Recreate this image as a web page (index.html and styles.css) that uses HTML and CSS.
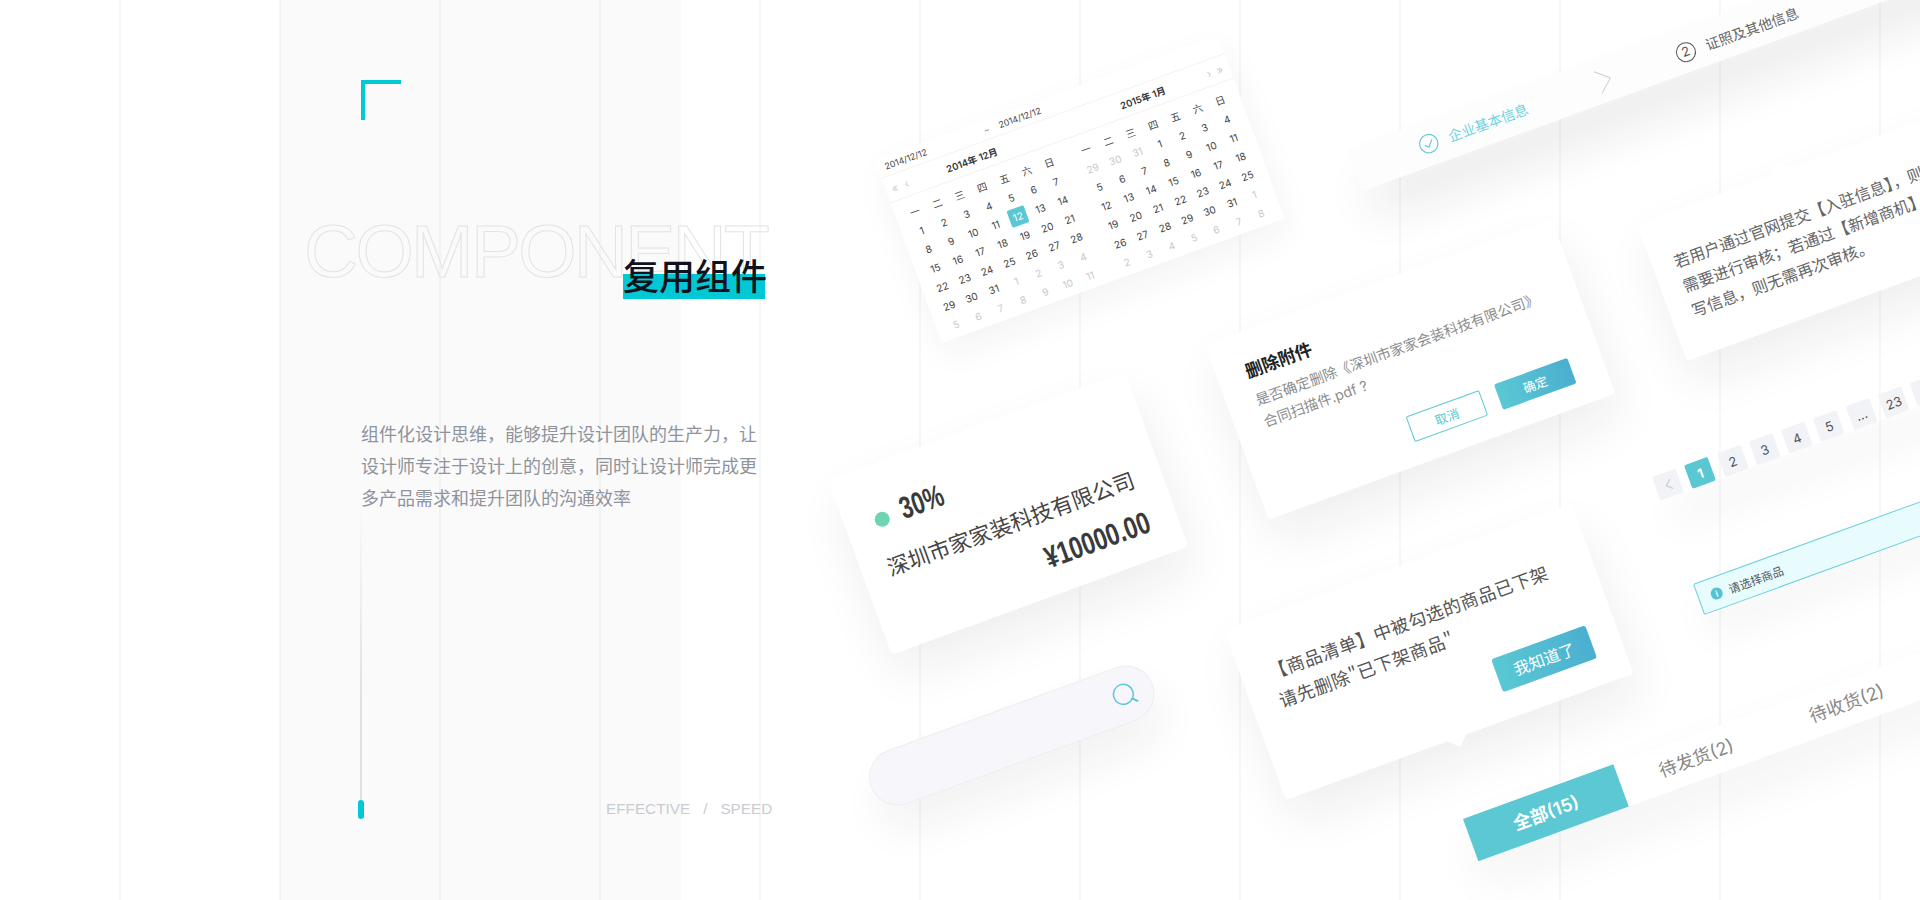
FILE: index.html
```html
<!DOCTYPE html>
<html lang="zh-CN">
<head>
<meta charset="utf-8">
<title>复用组件</title>
<link rel="stylesheet" href="styles.css">
</head>
<body>
<main class="page">
  <div class="gridlines"></div>
  <section class="panel">
    <div class="corner"></div>
    <div class="heading">
      <div class="ghost">COMPONENT</div>
      <h1 class="title">复用组件</h1>
    </div>
    <p class="intro">组件化设计思维，能够提升设计团队的生产力，让<br>设计师专注于设计上的创意，同时让设计师完成更<br>多产品需求和提升团队的沟通效率</p>
    <div class="foot">
      <div class="track"><i class="knob"></i></div>
      <div class="tags"><span>EFFECTIVE</span><span>/</span><span>SPEED</span></div>
    </div>
  </section>

  <div class="tilt steps">
    <span class="step-icon"><svg width="20" height="20" viewBox="0 0 20 20" fill="none" stroke="#5ac8d6" stroke-width="1.1"><circle cx="10" cy="10" r="9.2"/><path d="M6 10.4l3 3 5-6" stroke-linecap="round" stroke-linejoin="round"/></svg></span>
    <span class="step-text on">企业基本信息</span>
    <svg class="chev" width="15" height="25" viewBox="0 0 15 25" fill="none" stroke="#c8ccd6" stroke-width="1"><path d="M1 1l13 11.500L1 24"/></svg>
    <span class="step-num">2</span>
    <span class="step-text">证照及其他信息</span>
    <svg class="chev" width="15" height="25" viewBox="0 0 15 25" fill="none" stroke="#c8ccd6" stroke-width="1"><path d="M1 1l13 11.500L1 24"/></svg>
  </div>

  <div class="tilt cal">
    <div class="cal-inputs"><span>2014/12/12</span><span class="tilde">~</span><span>2014/12/12</span></div>
    <div class="cal-head">
      <span class="nav">« ‹</span><b class="m1">2014年 12月</b><b class="m2">2015年 1月</b><span class="nav nav-r">› »</span>
    </div>
    <div class="cal-body">
      <div class="month">
        <span class="wk">一</span><span class="wk">二</span><span class="wk">三</span><span class="wk">四</span><span class="wk">五</span><span class="wk">六</span><span class="wk">日</span>
        <span>1</span><span>2</span><span>3</span><span>4</span><span>5</span><span>6</span><span>7</span>
        <span>8</span><span>9</span><span>10</span><span>11</span><span class="today"><em>12</em></span><span>13</span><span>14</span>
        <span>15</span><span>16</span><span>17</span><span>18</span><span>19</span><span>20</span><span>21</span>
        <span>22</span><span>23</span><span>24</span><span>25</span><span>26</span><span>27</span><span>28</span>
        <span>29</span><span>30</span><span>31</span><span class="off">1</span><span class="off">2</span><span class="off">3</span><span class="off">4</span>
        <span class="off">5</span><span class="off">6</span><span class="off">7</span><span class="off">8</span><span class="off">9</span><span class="off">10</span><span class="off">11</span>
      </div>
      <div class="month">
        <span class="wk">一</span><span class="wk">二</span><span class="wk">三</span><span class="wk">四</span><span class="wk">五</span><span class="wk">六</span><span class="wk">日</span>
        <span class="off">29</span><span class="off">30</span><span class="off">31</span><span>1</span><span>2</span><span>3</span><span>4</span>
        <span>5</span><span>6</span><span>7</span><span>8</span><span>9</span><span>10</span><span>11</span>
        <span>12</span><span>13</span><span>14</span><span>15</span><span>16</span><span>17</span><span>18</span>
        <span>19</span><span>20</span><span>21</span><span>22</span><span>23</span><span>24</span><span>25</span>
        <span>26</span><span>27</span><span>28</span><span>29</span><span>30</span><span>31</span><span class="off">1</span>
        <span class="off">2</span><span class="off">3</span><span class="off">4</span><span class="off">5</span><span class="off">6</span><span class="off">7</span><span class="off">8</span>
      </div>
    </div>
  </div>

  <div class="tilt card stat">
    <div class="stat-top"><i class="dot"></i><span class="cond pct">30%</span></div>
    <div class="stat-name">深圳市家家装科技有限公司</div>
    <div class="stat-price"><span class="cond price">¥10000.00</span></div>
  </div>

  <div class="tilt search">
    <svg width="24" height="24" viewBox="0 0 24 24" fill="none" stroke="#5ac8d6"><circle cx="11" cy="11" r="10" stroke-width="1.500"/><path d="M18 18l4 4" stroke-width="2" stroke-linecap="round"/></svg>
  </div>

  <div class="tilt card dialog">
    <h2 class="dialog-title">删除附件</h2>
    <p class="dialog-text">是否确定删除《深圳市家家会装科技有限公司》<br>合同扫描件.pdf ?</p>
    <div class="dialog-actions"><span class="btn ghost-btn">取消</span><span class="btn fill-btn">确定</span></div>
  </div>

  <div class="tilt card tip">
    <p class="tip-text">【商品清单】中被勾选的商品已下架<br>请先删除"已下架商品"</p>
    <span class="tip-btn">我知道了</span>
  </div>

  <div class="tilt card note">
    <p class="note-text">若用户通过官网提交【入驻信息】，则无<br>需要进行审核；若通过【新增商机】填<br>写信息，则无需再次审核。</p>
  </div>

  <div class="tilt pager">
    <span class="pg prev"><svg width="8" height="12" viewBox="0 0 8 12" fill="none" stroke="#c9ccd3" stroke-width="1.200"><path d="M7 1L1.500 6 7 11"/></svg></span>
    <span class="pg cur">1</span><span class="pg">2</span><span class="pg">3</span><span class="pg">4</span><span class="pg">5</span><span class="pg">...</span><span class="pg">23</span><span class="pg"></span>
  </div>

  <div class="tilt alert">
    <span class="alert-i">i</span><span>请选择商品</span>
  </div>

  <div class="tilt tabs">
    <span class="tab active">全部(15)</span><span class="tab">待发货(2)</span><span class="tab">待收货(2)</span>
  </div>
</main>
</body>
</html>
```

FILE: styles.css
```css
* { box-sizing: border-box; }
html, body { margin: 0; height: 100%; background: #fff; }
body { font-family: "Inter", "Noto Sans CJK SC", sans-serif; color: #333; }
h1, h2, p { margin: 0; font-weight: inherit; }
.page { position: relative; width: 1920px; height: 900px; overflow: hidden; background: #fff; }

/* left panel */
.panel { position: relative; margin-left: 280px; width: 401px; height: 900px; background: rgba(0,0,0,.02); padding: 80px 0 0 81px; display: flex; flex-direction: column; }
.corner { width: 40px; height: 40px; border-top: 4px solid #00c8d4; border-left: 4px solid #00c8d4; flex: none; }
.heading { position: relative; height: 80px; margin: 91px 0 0 -57px; flex: none; }
.ghost { font: 75px/80px "Liberation Sans", Arial, sans-serif; letter-spacing: -2.700px; color: transparent; -webkit-text-stroke: 1px #e1e3e5; white-space: nowrap; }
.title { position: absolute; left: 319px; top: 46px; width: 142px; height: 42px; font: 500 36px/34px "Noto Sans CJK SC", sans-serif; color: #11131c; white-space: nowrap; background: linear-gradient(transparent 17px, #00c8d4 17px, #00c8d4 42px); }
.intro { margin-top: 126px; font: 18px/32px "Noto Sans CJK SC", sans-serif; color: #8f939c; white-space: nowrap; flex: none; }
.foot { display: flex; align-items: flex-end; height: 320px; margin-top: -33px; flex: none; }
.track { position: relative; flex: none; width: 2px; margin-left: -1px; height: 300px; background: linear-gradient(rgba(221,224,228,0), #dde0e4 70%); }
.knob { position: absolute; left: -2px; bottom: -19px; width: 6px; height: 19px; border-radius: 3px; background: #00c8d4; }
.tags { flex: none; display: flex; gap: 13px; margin-left: 244px; margin-bottom: -19px; font: 15.300px/20px "Liberation Sans", Arial, sans-serif; color: #c8ccd2; white-space: nowrap; }

.gridlines { position: absolute; inset: 0; background-image: linear-gradient(to right, #f6f7f7 2px, transparent 2px); background-size: 160px 100%; background-position: 119px 0; }

/* tilted components: free canvas */
.tilt { position: absolute; transform-origin: 0 0; transform: rotate(-20deg); }
.card { background: #fff; border-radius: 4px; box-shadow: 0 24px 50px rgba(30,30,50,.07); }

/* steps */
.steps { left: 1347px; top: 150px; width: 800px; height: 44px; padding-left: 69px; display: flex; align-items: center; background: #fdfdfd; font: 14px/20px "Noto Sans CJK SC", sans-serif; box-shadow: 0 32px 50px -10px rgba(30,30,40,.16); }
.step-icon { width: 20px; height: 20px; margin-right: 11px; }
.step-icon svg { display: block; }
.step-text { color: #666; width: 84px; white-space: nowrap; }
.step-text.on { color: #6fd2dd; }
.chev { margin-left: 74px; }
.step-num { width: 20px; height: 20px; margin-left: 69px; margin-right: 11px; margin-top: 3px; border: 1.500px solid #555; border-radius: 50%; text-align: center; font: 13px/17px "Inter", sans-serif; color: #555; flex: none; }
.step-text + .chev + .step-num + .step-text { width: 98px; margin-top: 3px; }
.step-num + .step-text + .chev { margin-left: 61px; }

/* calendar */
.cal { left: 875px; top: 160px; width: 365px; height: 195px; background: #fff; font-size: 10px; box-shadow: 0 14px 34px rgba(30,30,50,.05); }
.cal-inputs { height: 20px; display: flex; align-items: center; padding-left: 7px; border-bottom: 1px solid #f3f3f3; font-size: 8.800px; color: #444; white-space: nowrap; }
.tilde { margin: 0 10px 0 61px; color: #999; }
.cal-head { position: relative; height: 26px; border-bottom: 1px solid #f3f3f3; display: flex; align-items: center; white-space: nowrap; font-family: "Inter", "Noto Sans CJK SC", sans-serif; }
.nav { position: absolute; left: 6px; color: #ccc; font-size: 11px; word-spacing: 4px; }
.nav-r { left: auto; right: 7px; word-spacing: 3px; }
.cal-head b { position: absolute; width: 100px; text-align: center; font-size: 9.500px; font-weight: 600; color: #333; }
.m1 { left: 41px; }
.m2 { left: 223px; }
.cal-body { display: flex; gap: 15.400px; padding: 5.600px 8px 0; }
.month { display: grid; grid-template-columns: repeat(7, 23.800px); grid-auto-rows: 20px; align-items: center; justify-items: center; color: #444; }
.month .wk { font-family: "Noto Sans CJK SC", sans-serif; font-size: 10px; color: #444; }
.month .off { color: #c9c9c9; }
.today em { display: block; width: 18px; height: 18px; border-radius: 2px; background: #5ac8d3; color: #fff; font-style: normal; text-align: center; line-height: 18px; }

/* stat card */
.stat { left: 828px; top: 480px; width: 316px; height: 186px; padding: 37px 26px 0; color: #3a3a3a; }
.stat-top { display: flex; align-items: center; height: 32px; }
.dot { width: 15px; height: 15px; margin-left: 4px; margin-top: 5px; border-radius: 50%; background: #6dd5b3; }
.cond { display: inline-block; font: bold 31px/32px "Liberation Sans", Arial, sans-serif; white-space: nowrap; }
.pct { margin-left: 13px; transform: scaleX(.72); transform-origin: 0 50%; }
.stat-name { margin-top: 18px; font: 21.800px/32px "Noto Sans CJK SC", sans-serif; white-space: nowrap; color: #444; }
.stat-price { margin-top: 14px; margin-right: 2px; display: flex; justify-content: flex-end; }
.price { transform: scaleX(.75); transform-origin: 100% 50%; }

/* search */
.search { left: 861px; top: 760px; width: 300px; height: 57px; padding-right: 17px; display: flex; align-items: center; justify-content: flex-end; background: #f7f7fb; border: 1px solid #eeeef1; border-radius: 29px; box-shadow: 0 26px 44px rgba(30,30,50,.06); }

/* dialog */
.dialog { left: 1205px; top: 345px; width: 369px; height: 186px; padding: 27px 33px 23px 29px; display: flex; flex-direction: column; }
.dialog-title { font: 700 17.500px/24px "Noto Sans CJK SC", sans-serif; color: #222; }
.dialog-text { margin-top: 7px; font: 14.300px/23px "Inter", "Noto Sans CJK SC", sans-serif; color: #8c8c8c; white-space: nowrap; }
.dialog-actions { margin-top: auto; display: flex; justify-content: flex-end; gap: 16px; }
.btn { width: 78px; height: 27px; border-radius: 2px; text-align: center; font: 12.500px/25px "Noto Sans CJK SC", sans-serif; }
.ghost-btn { border: 1px solid #5ac8d3; color: #5ac8d3; }
.fill-btn { background: linear-gradient(90deg, #5ac8d3, #4bafd0); color: #fff; line-height: 27px; }

/* tooltip */
.tip { left: 1224px; top: 630px; width: 370px; height: 181px; padding: 40px 0 0 28px; }
.tip::after, .note::before { content: ""; position: absolute; width: 14px; height: 14px; background: #fff; transform: rotate(45deg); }
.tip::after { left: 175px; top: 174px; }
.tip-text { font: 18px/30px "Noto Sans CJK SC", sans-serif; letter-spacing: .5px; color: #555; white-space: nowrap; }
.tip-btn { position: absolute; left: 241px; top: 119px; width: 100px; height: 35px; border-radius: 3px; background: linear-gradient(90deg, #5ac8d3, #4bafd0); color: #fff; text-align: center; font: 16px/35px "Noto Sans CJK SC", sans-serif; }

/* note */
.note { left: 1637px; top: 224px; width: 370px; height: 146px; padding: 35px 0 0 22px; }
.note::before { left: 147px; top: -7px; }
.note-text { position: relative; font: 16px/26px "Noto Sans CJK SC", sans-serif; color: #666; white-space: nowrap; }

/* pager */
.pager { left: 1652px; top: 477px; display: flex; gap: 9.300px; box-shadow: 0 30px 40px -8px rgba(30,30,40,.13); }
.pg { width: 25px; height: 25px; border-radius: 2px; background: #f2f3f7; display: flex; align-items: center; justify-content: center; font-size: 13px; color: #555; }
.pg.cur { background: #5ac8d3; color: #fff; font-weight: 700; }

/* alert */
.alert { left: 1693px; top: 584px; width: 800px; height: 33px; padding-left: 12px; display: flex; align-items: center; gap: 7px; background: #e8fcfe; border: 1px solid #6ed0dc; border-radius: 2px; font: 11.500px/16px "Noto Sans CJK SC", sans-serif; color: #555; box-shadow: 0 22px 40px rgba(30,30,40,.05); }
.alert-i { width: 12px; height: 12px; border-radius: 50%; background: #55c3d5; color: #fff; font: 700 8px/12px "Inter", sans-serif; text-align: center; }

/* tabs */
.tabs { left: 1463px; top: 819px; width: 800px; height: 45px; display: flex; background: #fff; box-shadow: 0 24px 50px rgba(30,30,40,.06); }
.tab { width: 160px; text-align: center; font: 18px/45px "Inter", "Noto Sans CJK SC", sans-serif; color: #888; }
.tab.active { background: #5bc8d3; color: #fff; font-weight: 600; }
```
